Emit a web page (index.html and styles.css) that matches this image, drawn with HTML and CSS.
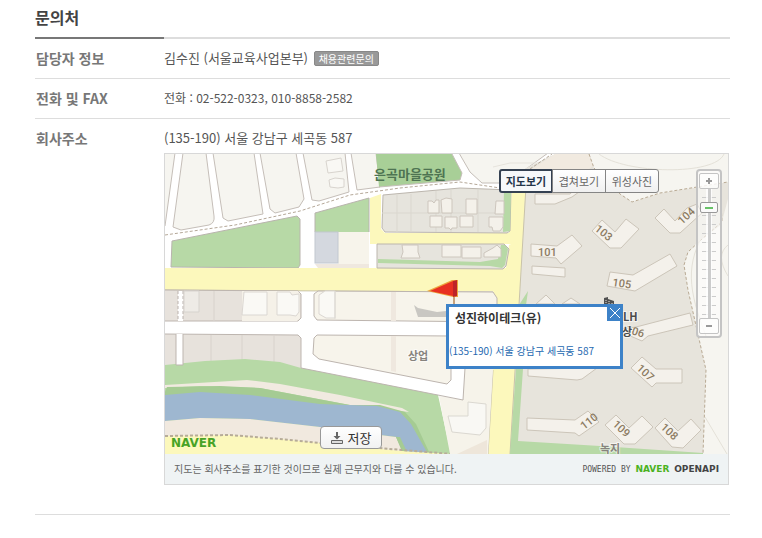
FILE: index.html
```html
<!DOCTYPE html>
<html lang="ko">
<head>
<meta charset="utf-8">
<title>문의처</title>
<link rel="stylesheet" href="styles.css">
</head>
<body>
<main class="contact">
  <h1 class="contact-title">문의처</h1>
  <dl class="info">
    <div class="row">
      <dt>담당자 정보</dt>
      <dd>김수진 (서울교육사업본부) <span class="tag">채용관련문의</span></dd>
    </div>
    <div class="row">
      <dt>전화 및 FAX</dt>
      <dd class="phone">전화 : 02-522-0323, 010-8858-2582</dd>
    </div>
    <div class="row row-address">
      <dt>회사주소</dt>
      <dd>
        <p class="address">(135-190) 서울 강남구 세곡동 587</p>
        <section class="map-box">
          <div class="map">
            <svg class="map-canvas" viewBox="165 154 563 300" preserveAspectRatio="xMinYMin slice" aria-hidden="true">
              <rect x="165" y="154" width="563" height="300" fill="#fff"/>
              <!-- north blocks -->
              <g fill="#f6f5f0" stroke="#c5beb8">
                <path d="M164 153H175L165 226H164Z"/>
                <path d="M183 153H206L214 216Q215 223 209 225L181 230L173 227Z"/>
                <path d="M213 153H254L263 214L228 221L223 218Z"/>
                <path d="M260 153H296L304 199L299 207L275 213L270 209Z"/>
                <path d="M303 153H345L349 192L319 201L312 200Z"/>
                <path d="M351 153H376L380 187L357 190Z"/>
                <path d="M459 153H548L526 169L500 183H482L470 172Z"/>
              </g>
              <path d="M376 154H452L462 173L460 180L379 187Z" fill="#a8cf97"/>
              <path d="M452 154L462 173L460 180L379 187" fill="none" stroke="#c5beb8"/>
              <g fill="#f9f8f4" stroke="#d8d4ce">
                <path d="M326 161L341 158L343 171L328 173Z"/>
                <path d="M329 180L335 178L344 179V187L338 188L330 187Z"/>
              </g>
              <path d="M493 167L510 163L540 163" fill="none" stroke="#e6e3dc"/>
              <path d="M165 235L235 225L300 211L350 195L400 188L460 182L500 188" fill="none" stroke="#b5a898" stroke-dasharray="3 2"/>
              <!-- green belts -->
              <g fill="#b7d9a6" stroke="#b9b4ae">
                <path d="M172 241L297 216L300 219V265L298 268L171 267Z"/>
                <path d="M315 232V213L369 198V232" />
              </g>
              <rect x="338" y="232" width="31" height="36" fill="#f7f4eb"/>
              <path d="M315 264H369V268H318Z" fill="#efe8df"/>
              <rect x="315" y="232" width="23" height="31" fill="#d4d8df" stroke="#c2c8d0"/>
              <!-- residential base -->
              <path d="M526 168L555 154H590L594 168L612 186L632 202L660 193L728 182V454H509L519 305Z" fill="#e7e4dc"/>
              <path d="M555 154H589L593 166L588 170H530Z" fill="#f1eae0"/>
              <path d="M530 169L552 154" stroke="#b5a898" stroke-dasharray="3 2"/>
              <path d="M590 154L594 168L620 194L632 202L660 193L728 182V154Z" fill="#f6f5f0"/>
              <path d="M728 199L721 225L700 240L688 252L684 265L688 290L697 330L706 370L703 454H728Z" fill="#f6f5f0"/>
              <path d="M589 154L594 168L620 194L632 202L660 193L728 182M721 203L722 222L702 239L688 252L684 265L688 290L697 330L706 370L703 454" fill="none" stroke="#b9aa94" stroke-dasharray="3 2"/>
              <path d="M599 154C625 174 715 176 724 154M706 230C685 263 688 290 706 336M728 245Q715 255 728 276M705 417L727 454" fill="none" stroke="#e4e1d8"/>
              <!-- yellow roads -->
              <path d="M165 268H506L509 245L511 244H370V198L381 194V229L385 233H509L512 187L526 180L519 305L510 454H488L497 305L493 291H165Z" fill="#fcf8bc"/>
              <path d="M526 186L519 305L510 454M488 454L493 370M165 290L493 292" fill="none" stroke="#c9c3a9"/>
              <path d="M383 195L460 188L511 190L510 231L507 233L385 232L382 228Z" fill="#e6e4dd" stroke="#bcb6ae"/>
              <path d="M504 190H511L510 231L503 232Z" fill="#b7d9a6"/>
              <path d="M382 213H502M397 195V232M411 194V232M436 191V232M451 190V232M478 189V232" stroke="#dad7cf"/>
              <path d="M377 244H504L509 249L506 266L503 269L377 268Z" fill="#e6e4dd" stroke="#bcb6ae"/>
              <path d="M378 259L480 262L498 259L501 245H505L508 249L505 265L502 268L490 266L378 263Z" fill="#b7d9a6"/>
              <g fill="#f4f1ea" stroke="#cdc6bd">
                <path d="M428 201H432L434 203L436 200H439V213H428ZM441 200L446 198L452 199V213H442ZM466 199H477V214H466ZM496 201H504V214H495ZM430 216H442V227H430ZM445 217H457V228H452L451 230L449 228H445ZM460 216H473V227H460ZM489 217H503V227L500 231H493L492 227H489Z"/>
                <path d="M402 245H418V252L420 258H401L403 252ZM442 245H461V257H442ZM462 247H481V258H462ZM484 253L493 248L497 245L501 249V257H484Z"/>
              </g>
              <!-- central blocks -->
              <path d="M164 290L298 291L301 294V318L298 321L164 321Z" fill="#e7e2dc" stroke="#bdb5af"/>
              <path d="M242 291L298 291L300 294V318L297 321H242Z" fill="#f5f1e8"/>
              <path d="M178 291H183V321H178Z" fill="#fff"/>
              <path d="M178 291V321M183 291V321" stroke="#bab2ad" stroke-dasharray="3 2"/>
              <path d="M184 291H199V312H184Z" fill="#eeebe6" stroke="#d7d3ce"/>
              <path d="M214 291V321" stroke="#d8d2cc"/>
              <path d="M244 292H267V315H242ZM277 292H290L292 295L299 294V312L296 316L290 315H277Z" fill="#faf9f5" stroke="#dbd7d2"/>
              <path d="M318 291L493 292L497 298V322L317 320L314 316V294Z" fill="#f7f4eb" stroke="#bdb5af"/>
              <path d="M391 292H396V321H391Z" fill="#efe8df"/>
              <path d="M319 295L325 291H335V318H326L319 314Z" fill="#faf9f5" stroke="#dbd7d2"/>
              <path d="M335 291V319" stroke="#dedad4"/>
              <path d="M164 334L298 335L301 338V370L164 368Z" fill="#e7e2dc" stroke="#bdb5af"/>
              <path d="M211 335V362M242 335V362M274 335V364" stroke="#d8d2cc"/>
              <path d="M317 335L451 336V380L447 384L319 359L313 354L314 338Z" fill="#f7f4eb" stroke="#bdb5af"/>
              <path d="M391 336H396V372L391 371Z" fill="#efe8df"/>
              <!-- riverside -->
              <path d="M165 365L205 361L245 359L280 362L301 368L352 378L438 395L451 454H165Z" fill="#b7d9a6"/>
              <path d="M176 334V365H183V334" fill="#fff" stroke="#bdb5af"/>
              <path d="M165 385L247 380L280 384L340 395L402 408L409 412L350 405L260 388L200 386L165 388Z" fill="#f1eae0"/>
              <path d="M167 387L220 386L260 388L350 405H380L405 412L416 424L430 454H165V392Z" fill="#a5cb93"/>
              <path d="M165 395L200 392L250 395L320 404L377 406L400 412L411 424L428 454H405L398 437L380 435L320 427L250 419L200 418L165 421Z" fill="#9eb7d0"/>
              <path d="M165 421L200 418L250 419L320 427L380 435L396 437L403 454H165Z" fill="#f1e9df"/>
              <path d="M396 437H400L407 452H403Z" fill="#a5cb93"/>
              <path d="M165 436L230 435L280 439L320 443L402 451L451 454H165Z" fill="#fcf8bc"/>
              <path d="M165 436L230 435L280 439L320 443L402 450L452 454" fill="none" stroke="#b7ac98" stroke-width="2" stroke-dasharray="3 2"/>
              <path d="M439 396L463 400L465 369L493 369L488 454H450Z" fill="#f6f3ea"/>
              <path d="M301 368L463 400L465 368" fill="none" stroke="#bdb5af"/>
              <path d="M487 440L457 454H487Z" fill="#eee6da"/>
              <path d="M448 416H468V402L486 404V428L480 435L452 432Z" fill="#f9f8f4" stroke="#dbd8d1"/>
              <!-- apartment compound -->
              <path d="M523 369L518 441L600 446L703 453V454H510L516 369ZM519 305L528 291L526 305Z" fill="#b7d9a6"/>
              <g fill="#f4f1eb" stroke="#ccc5b9">
                <path d="M535 194V204H555L572 197L590 184L585 180L570 194Z"/>
                <path d="M531 244L557 246L572 235L582 246L561 264L556 258L531 256ZM532 266L565 268V277L532 274Z"/>
                <path d="M602 220L615 232L626 219L639 229L621 248H610L592 231Z"/>
                <path d="M664 209L675 221L687 208L697 204L702 213L680 233H670L655 218Z"/>
                <path d="M610 272L633 275L670 254L677 266L635 291L607 286Z"/>
                <path d="M536 304L546 295L555 304ZM562 304L571 298L580 304Z"/>
                <path d="M615 330L636 327L690 313L693 325L648 336L642 341L628 335Z"/>
                <path d="M528 369V376L577 380L582 379L597 368ZM642 357L656 369H682V383H656L652 387L631 368Z"/>
                <path d="M527 418L575 420L588 411L599 422L579 436L575 433L527 430Z"/>
                <path d="M616 415L629 428L642 416L653 427L635 444H624L605 425ZM665 418L678 431L691 419L701 430L683 448L672 447L655 428Z"/>
              </g>
              <g class="lot">
                <text x="538" y="256">101</text>
                <text transform="translate(594 230) rotate(38)">103</text>
                <text transform="translate(682 225) rotate(-43)">104</text>
                <text transform="translate(612 286) rotate(8)">105</text>
                <text transform="translate(625 332) rotate(18)">106</text>
                <text transform="translate(636 369) rotate(43)">107</text>
                <text transform="translate(660 428) rotate(43)">108</text>
                <text transform="translate(612 425) rotate(43)">109</text>
                <text transform="translate(584 430) rotate(-38)">110</text>
              </g>
              <path d="M604 306V298L608 297V299L614 301V306Z" fill="#505050"/>
              <path d="M606 300V304M609 301V304M612 303V305" stroke="#e7e4dc" stroke-dasharray="1 1"/>
              <text class="place park" x="374" y="179">은곡마을공원</text>
              <text class="place zone" x="408" y="360">상업</text>
              <text class="place zone" x="600" y="453">녹지</text>
              <text class="place shop" x="623" y="321">LH</text>
              <text class="place shop" x="622" y="336">상</text>
              <!-- flag pin -->
              <path d="M414 305L418 308L437 312L446 311V317H418Z" fill="#bab8b4" opacity=".75"/>
              <path d="M453 294H455V305H453Z" fill="#c7a27e"/>
              <path d="M427 291L452 280H458V297L453 297Z" fill="#eda53c"/>
              <path d="M430 291L453 281V296Z" fill="#e83022"/>
              <path d="M453 281L457 280V296L453 297Z" fill="#bd2428"/>
            </svg>

            <div class="map-types">
              <button type="button" class="map-type is-on">지도보기</button>
              <button type="button" class="map-type">겹쳐보기</button>
              <button type="button" class="map-type">위성사진</button>
            </div>

            <div class="zoom">
              <button type="button" class="zoom-button" aria-label="확대"><svg viewBox="0 0 6 6" aria-hidden="true"><path d="M0 2H2V0H4V2H6V4H4V6H2V4H0Z"/></svg></button>
              <input class="zoom-range" type="range" min="0" max="9" value="1" aria-label="지도 배율">
              <button type="button" class="zoom-button" aria-label="축소"><svg viewBox="0 0 6 6" aria-hidden="true"><path d="M0 2H6V4H0Z"/></svg></button>
            </div>

            <div class="popup">
              <h2>성진하이테크(유)</h2>
              <p>(135-190) 서울 강남구 세곡동 587</p>
              <button type="button" class="popup-close" aria-label="닫기"><svg viewBox="0 0 12 12" aria-hidden="true"><path d="M1 1L11 11M11 1L1 11"/></svg></button>
            </div>

            <span class="map-logo">NAVER</span>
            <button type="button" class="save"><svg viewBox="0 0 12 12" aria-hidden="true"><path d="M5 0H7V4H9.500L6 7.500L2.500 4H5Z"/><path class="tray" d="M.5 8.500H11.500V11.500H.5Z"/></svg>저장</button>
          </div>
          <footer class="map-foot">
            <p>지도는 회사주소를 표기한 것이므로 실제 근무지와 다를 수 있습니다.</p>
            <p class="powered">POWERED BY <b class="brand">NAVER</b> <b>OPENAPI</b></p>
          </footer>
        </section>
      </dd>
    </div>
  </dl>
</main>
</body>
</html>
```
FILE: styles.css
```css
* {
  box-sizing: border-box;
}

body {
  margin: 0;
  background: #fff;
  color: #555;
  font: 13px/20px "Noto Sans CJK KR", sans-serif;
}

h1, h2, p, dl, dd {
  margin: 0;
}

button {
  padding: 0;
  font-family: inherit;
}

.contact {
  padding: 7px 32px 0 35px;
}

.contact-title {
  height: 30px;
  color: #444;
  font-size: 16px;
  line-height: 20px;
}

.info {
  border-top: 2px solid #ddd;
}

.row {
  display: grid;
  grid-template-columns: 129px minmax(0, 1fr);
  padding: 9px 0 10px;
  border-bottom: 1px solid #ddd;
}

.row:first-child {
  margin-top: -2px;
  padding-top: 0;
}

.row:first-child dt {
  border-top: 2px solid #777;
}

.row:first-child dt,
.row:first-child dd {
  padding-top: 9px;
}

.row:first-child dd {
  margin-top: 2px;
}

.row-address {
  padding-bottom: 29px;
}

dt {
  padding-left: 1px;
  color: #777;
  font-size: 14px;
  font-weight: 700;
}

.phone {
  font-size: 12px;
}

.tag {
  display: inline-block;
  height: 15px;
  margin-left: 2px;
  padding: 0 4px;
  border: 1px solid #888;
  border-radius: 2px;
  background: #999;
  color: #fff;
  font-size: 10px;
  line-height: 13px;
}

.map-box {
  margin: 5px 1px 0 0;
  border: 1px solid #d8d8d8;
}

.map {
  position: relative;
  height: 300px;
  overflow: hidden;
}

.map-canvas {
  display: block;
  width: 100%;
  height: 100%;
}

.lot {
  fill: #8c7b62;
  font: 500 11px Roboto, sans-serif;
}

.place {
  paint-order: stroke;
  stroke: #fff;
  stroke-opacity: .6;
  stroke-width: 2px;
  font-weight: 700;
}

.park {
  fill: #4e7452;
  font-size: 13px;
  stroke-opacity: 0;
}

.zone {
  fill: #87837d;
  font-size: 11px;
}

.shop {
  fill: #4b4b4b;
  font-size: 11px;
}

.map-types {
  position: absolute;
  top: 15px;
  right: 69px;
  display: flex;
}

.map-type {
  width: 54px;
  height: 24px;
  margin-left: -1px;
  border: 1px solid #858585;
  background: linear-gradient(#fff, #f0f0f0);
  color: #666;
  font-size: 11px;
}

.map-type:last-child {
  border-radius: 0 3px 3px 0;
}

.map-type.is-on {
  border: 2px solid #354152;
  border-radius: 3px 0 0 3px;
  background: #f6f8fa;
  color: #25364a;
  font-weight: 700;
}

.zoom {
  position: absolute;
  top: 15px;
  right: 6px;
  display: flex;
  flex-direction: column;
  align-items: center;
  width: 26px;
  padding: 2px 0;
  border: 2px solid #c4c4c4;
  border-radius: 4px;
  background: rgba(255, 255, 255, .5);
}

.zoom-button {
  display: grid;
  place-items: center;
  width: 20px;
  height: 16px;
  border: 1px solid #c4c4c4;
  border-radius: 2px;
  background: rgba(255, 255, 255, .6);
}

.zoom-button svg {
  width: 6px;
  height: 6px;
  fill: #999;
}

.zoom-range {
  appearance: none;
  width: 20px;
  height: 129px;
  margin: 0;
  background:
    linear-gradient(#ccc, #ccc) center / 3px 100% no-repeat,
    linear-gradient(90deg, transparent 7px, rgba(255, 255, 255, .8) 7px 13px, transparent 13px),
    repeating-linear-gradient(transparent 0 8px, #ccc 8px 9px) center / 14px 100% no-repeat;
  writing-mode: vertical-lr;
}

.zoom-range::-webkit-slider-thumb {
  appearance: none;
  width: 18px;
  height: 11px;
  border: 1px solid #999;
  border-radius: 2px;
  background: linear-gradient(#68c268, #68c268) center / 8px 2px no-repeat, #fafafa;
}

.popup {
  position: absolute;
  top: 150px;
  left: 281px;
  width: 177px;
  height: 65px;
  border: 3px solid #3d82c8;
  background: #fff;
}

.popup h2 {
  padding-left: 6px;
  color: #333;
  font-size: 12px;
  line-height: 22px;
}

.popup p {
  padding-top: 12px;
  color: #2568b0;
  font-size: 10px;
  white-space: nowrap;
}

.popup-close {
  position: absolute;
  top: -3px;
  right: -3px;
  display: grid;
  place-items: center;
  width: 16px;
  height: 17px;
  border: 0;
  background: #3d82c8;
}

.popup-close svg {
  width: 12px;
  height: 12px;
  stroke: #fff;
}

.map-logo {
  position: absolute;
  bottom: 3px;
  left: 6px;
  color: #48a326;
  font: 700 12px/16px "DejaVu Sans", sans-serif;
}

.save {
  position: absolute;
  bottom: 5px;
  left: 155px;
  display: flex;
  gap: 5px;
  align-items: center;
  justify-content: center;
  width: 62px;
  height: 23px;
  border: 1px solid #999;
  border-radius: 4px;
  background: linear-gradient(#fff, #f1f1f1);
  color: #333;
  font-size: 13px;
}

.save svg {
  width: 12px;
  height: 12px;
  fill: #666;
}

.save .tray {
  fill: #ddd;
  stroke: #666;
}

.map-foot {
  display: flex;
  align-items: center;
  justify-content: space-between;
  height: 30px;
  padding: 0 9px;
  background: #eff3f4;
  color: #666;
  font-size: 10px;
}

.powered {
  color: #555;
  font: 8px/20px "DejaVu Sans Mono", monospace;
}

.powered b {
  color: #444;
  font: 700 9px/20px "DejaVu Sans", sans-serif;
}

.powered .brand {
  color: #4bb21f;
}
```
